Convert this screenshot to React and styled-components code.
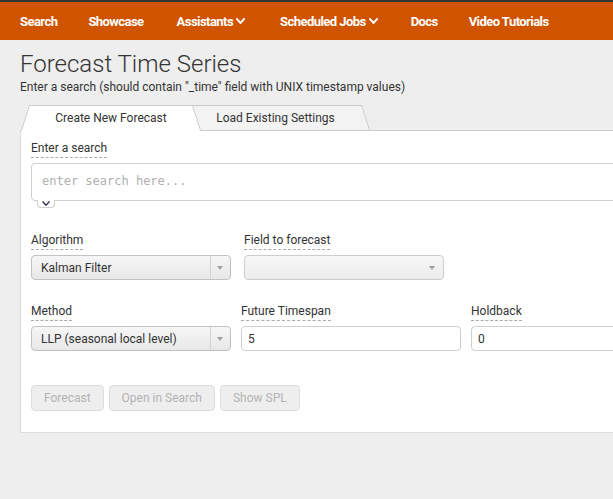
import React from 'react';
import styled, { createGlobalStyle } from 'styled-components';

const Global = createGlobalStyle`
  html, body { margin: 0; padding: 0; background: #eeeeee; overflow: hidden; }
  body { font-family: Roboto, "Liberation Sans", Arial, sans-serif; color: #333; }
  #root { width: 613px; height: 499px; overflow: hidden; }
  * { box-sizing: border-box; }
`;

const TopStrip = styled.div`
  height: 2px;
  background: #333;
`;

const NavBar = styled.nav`
  height: 38px;
  background: #d05300;
  display: flex;
  align-items: center;
  padding-left: 20px;
  gap: 31px;
`;

const NavItem = styled.a`
  color: #fff;
  font-weight: 700;
  font-size: 13px;
  letter-spacing: -0.55px;
  display: inline-flex;
  align-items: center;
  gap: 3px;
  padding: 0 ${p => (p.$dropdown ? 2 : 0)}px;
  text-decoration: none;
  white-space: nowrap;
`;

const Content = styled.main`
  padding: 10px 0 0 20px;
`;

const Title = styled.h1`
  margin: 0;
  font-weight: 300;
  font-size: 24px;
  line-height: 28px;
  color: #333;
  white-space: nowrap;
`;

const Subtitle = styled.p`
  margin: 2px 0 0;
  font-size: 12px;
  line-height: 14px;
  color: #333;
  white-space: nowrap;
`;

const TabBar = styled.div`
  display: flex;
  height: 25px;
  margin-top: 11px;
  padding-left: 5px;
`;

const Tab = styled.div`
  position: relative;
  width: ${p => p.$w}px;
  height: 25px;
  margin-left: ${p => p.$ml || 0}px;
  display: flex;
  align-items: center;
  justify-content: center;
  font-size: 12px;
  color: #333;
  white-space: nowrap;
  z-index: ${p => (p.$active ? 2 : 1)};
  &::before, &::after {
    content: '';
    position: absolute;
    top: 0;
    bottom: ${p => (p.$active ? -1 : 0)}px;
    width: 60%;
    background: ${p => (p.$active ? '#fff' : '#f3f3f3')};
    border-top: 1px solid #ccc;
    z-index: -1;
  }
  &::before {
    left: 0;
    border-left: 1px solid #ccc;
    transform: skewX(-17.7deg);
  }
  &::after {
    right: 0;
    border-right: 1px solid #ccc;
    transform: skewX(17.7deg);
  }
`;

const Panel = styled.section`
  background: #fff;
  border: 1px solid #dcdcdc;
  border-top-color: #cccccc;
  border-right: none;
  width: 640px;
  padding: 9px 0 21px 10px;
`;

const Field = styled.div`
  position: relative;
  width: ${p => (p.$w ? `${p.$w}px` : 'auto')};
  flex: ${p => (p.$w ? 'none' : '1')};
  display: flex;
  flex-direction: column;
  align-items: flex-start;
`;

const Label = styled.span`
  display: inline-block;
  font-size: 12px;
  line-height: 17px;
  color: #333;
  border-bottom: 1px dashed #aaa;
  margin-bottom: 5px;
`;

const SearchBox = styled.textarea`
  width: 600px;
  height: 38px;
  border: 1px solid #cfcfcf;
  border-radius: 4px;
  background: #fff;
  resize: none;
  padding: 9px 10px;
  font-family: "DejaVu Sans Mono", "Liberation Mono", monospace;
  font-size: 12px;
  line-height: 16px;
  outline: none;
  display: block;
  &::placeholder { color: #b0b0b0; }
`;

const ExpandTab = styled.span`
  position: absolute;
  left: 6px;
  top: calc(100% - 1px);
  width: 18px;
  height: 8px;
  background: #fff;
  border: 1px solid #cfcfcf;
  border-top: none;
  border-radius: 0 0 4px 4px;
  display: flex;
  align-items: center;
  justify-content: center;
`;

const Row = styled.div`
  display: flex;
  align-items: flex-start;
  gap: ${p => p.$gap}px;
  margin-top: ${p => p.$mt}px;
`;

const Select = styled.div`
  width: 100%;
  height: 25px;
  border: 1px solid ${p => (p.$disabled ? '#cdcdcd' : '#c2c2c2')};
  border-radius: 4px;
  background: ${p => (p.$disabled
    ? 'linear-gradient(#f7f7f7, #ececec)'
    : 'linear-gradient(#f6f6f6, #e8e8e8)')};
  display: flex;
  align-items: center;
  padding-left: 9px;
  font-size: 12px;
  color: #333;
  white-space: nowrap;
  overflow: hidden;
`;

const CaretBox = styled.span`
  margin-left: auto;
  width: 20px;
  align-self: stretch;
  border-left: ${p => (p.$divider ? '1px solid #d2d2d2' : 'none')};
  display: flex;
  align-items: center;
  justify-content: center;
  padding-right: 2px;
  &::after {
    content: '';
    border-left: 3px solid transparent;
    border-right: 3px solid transparent;
    border-top: 4px solid #a0a0a0;
  }
`;

const TextInput = styled.input`
  width: 100%;
  height: 25px;
  border: 1px solid #cfcfcf;
  border-radius: 4px;
  background: #fff;
  padding: 0 6px;
  font-family: Roboto, "Liberation Sans", Arial, sans-serif;
  font-size: 12px;
  color: #333;
  outline: none;
`;

const ButtonRow = styled.div`
  display: flex;
  gap: 5px;
  margin-top: 34px;
`;

const Button = styled.button`
  height: 26px;
  margin: 0;
  padding: 0 12px;
  border: 1px solid #dddddd;
  border-radius: 4px;
  background: #eeeeee;
  color: #b3b3b3;
  font-family: Roboto, "Liberation Sans", Arial, sans-serif;
  font-size: 12px;
  cursor: default;
`;

const Chevron = ({ color = '#fff', w = 9, h = 6, sw = 2 }) => (
  <svg width={w} height={h} viewBox="0 0 10 6" fill="none" preserveAspectRatio="none">
    <polyline points="1,1 5,5 9,1" stroke={color} strokeWidth={sw} strokeLinecap="round" strokeLinejoin="round" />
  </svg>
);

export default function App() {
  return (
    <>
      <Global />
      <TopStrip />
      <NavBar>
        <NavItem>Search</NavItem>
        <NavItem>Showcase</NavItem>
        <NavItem $dropdown>Assistants <Chevron /></NavItem>
        <NavItem $dropdown>Scheduled Jobs <Chevron /></NavItem>
        <NavItem>Docs</NavItem>
        <NavItem>Video Tutorials</NavItem>
      </NavBar>
      <Content>
        <Title>Forecast Time Series</Title>
        <Subtitle>Enter a search (should contain "_time" field with UNIX timestamp values)</Subtitle>
        <TabBar>
          <Tab $w={172} $active>Create New Forecast</Tab>
          <Tab $w={181} $ml={-12}>Load Existing Settings</Tab>
        </TabBar>
        <Panel>
          <Field>
            <Label>Enter a search</Label>
            <SearchBox placeholder="enter search here..." readOnly />
            <ExpandTab>
              <Chevron color="#2a2a4a" w={8} h={5} sw={1.6} />
            </ExpandTab>
          </Field>
          <Row $gap={13} $mt={31}>
            <Field $w={200}>
              <Label>Algorithm</Label>
              <Select>Kalman Filter<CaretBox $divider /></Select>
            </Field>
            <Field $w={200}>
              <Label>Field to forecast</Label>
              <Select $disabled><CaretBox /></Select>
            </Field>
          </Row>
          <Row $gap={10} $mt={23}>
            <Field $w={200}>
              <Label>Method</Label>
              <Select>LLP (seasonal local level)<CaretBox $divider /></Select>
            </Field>
            <Field $w={220}>
              <Label>Future Timespan</Label>
              <TextInput defaultValue="5" />
            </Field>
            <Field $w={200}>
              <Label>Holdback</Label>
              <TextInput defaultValue="0" />
            </Field>
          </Row>
          <ButtonRow>
            <Button>Forecast</Button>
            <Button>Open in Search</Button>
            <Button>Show SPL</Button>
          </ButtonRow>
        </Panel>
      </Content>
    </>
  );
}
